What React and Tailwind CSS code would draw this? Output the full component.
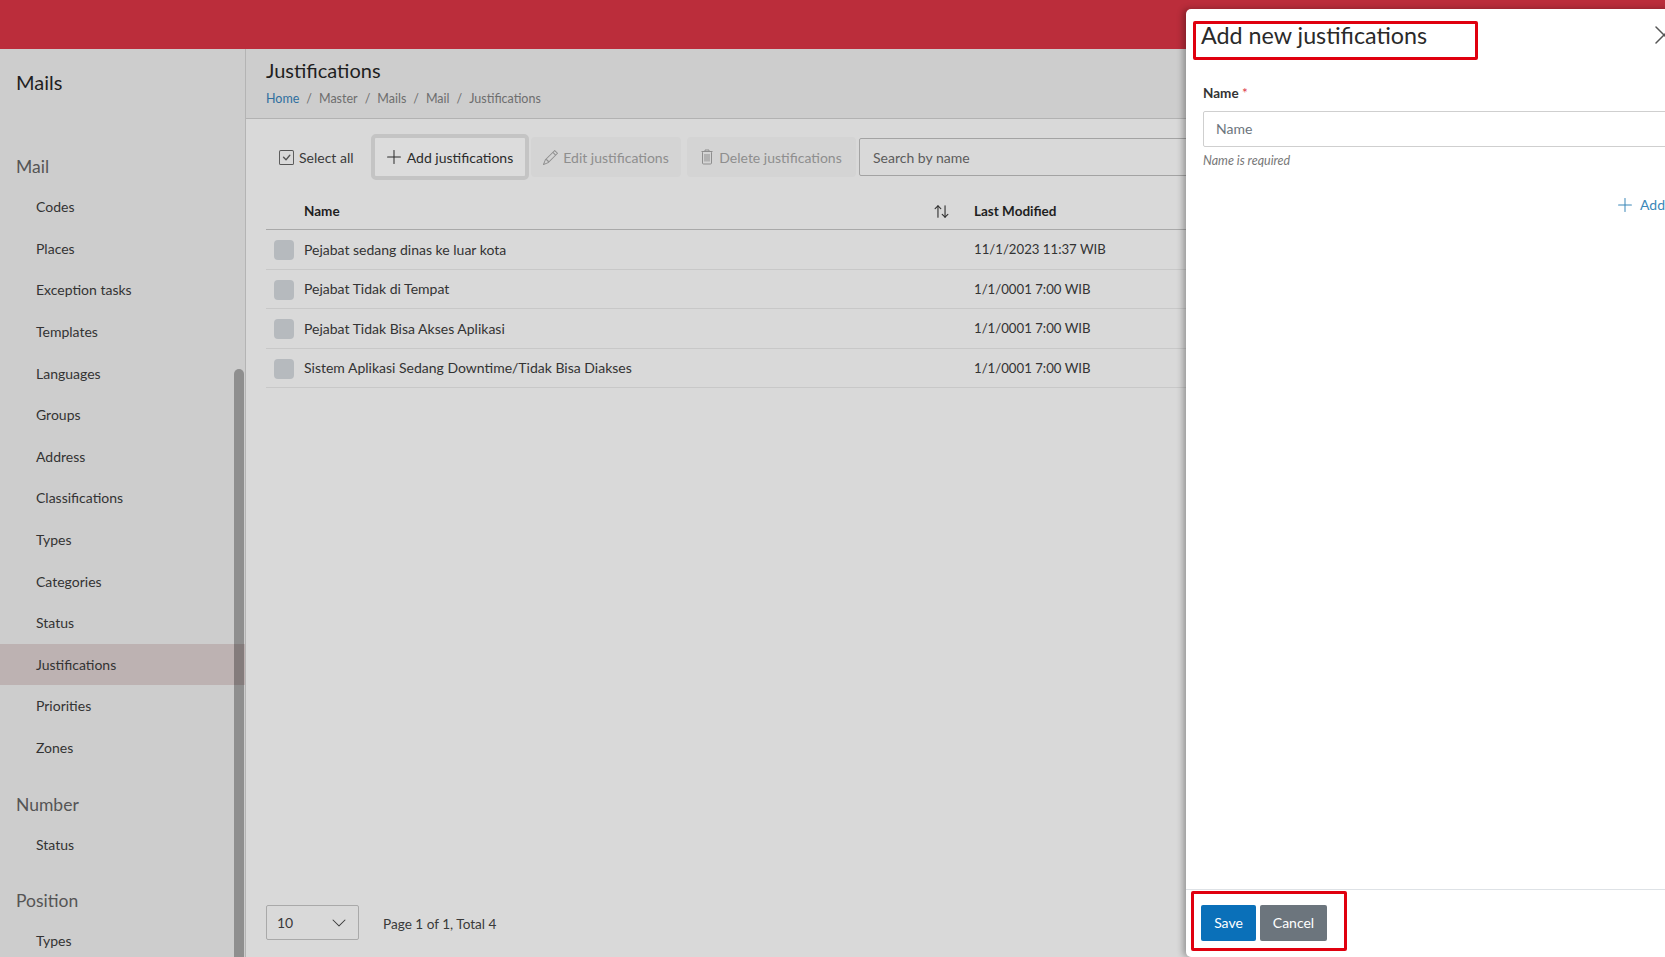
import React from "react";
import { BsCheckSquare, BsPencil, BsChevronDown } from "react-icons/bs";
import { ArrowUpDown, Plus, X } from "lucide-react";

const mailLinks = [
  "Codes",
  "Places",
  "Exception tasks",
  "Templates",
  "Languages",
  "Groups",
  "Address",
  "Classifications",
  "Types",
  "Categories",
  "Status",
  "Justifications",
  "Priorities",
  "Zones",
];

const rows = [
  ["Pejabat sedang dinas ke luar kota", "11/1/2023 11:37 WIB"],
  ["Pejabat Tidak di Tempat", "1/1/0001 7:00 WIB"],
  ["Pejabat Tidak Bisa Akses Aplikasi", "1/1/0001 7:00 WIB"],
  ["Sistem Aplikasi Sedang Downtime/Tidak Bisa Diakses", "1/1/0001 7:00 WIB"],
];

function TrashIcon() {
  return (
    <svg width="12" height="16" viewBox="0 0 12 16" fill="none" stroke="currentColor" strokeWidth="1" className="mr-[6px]">
      <path d="M4 2.5V1h4v1.5" />
      <path d="M0.5 2.5h11" />
      <rect x="1.5" y="2.5" width="9" height="12.5" rx="1" />
      <path d="M4 5v7.5M6 5v7.5M8 5v7.5" />
    </svg>
  );
}

function SideLink({ label }) {
  const active = label === "Justifications";
  return (
    <div className={`h-[41.6px] flex items-center pl-[36px] text-[14px] text-[#333] ${active ? "bg-[#bdb2b2]" : ""}`}>
      {label}
    </div>
  );
}

function SideHeading({ label, className }) {
  return <div className={`pl-[16px] h-[37px] flex items-center text-[17.5px] text-[#555] ${className}`}>{label}</div>;
}

function Sidebar() {
  return (
    <aside className="relative w-[246px] shrink-0 bg-[#cdcdcd] border-r border-[#b4b4b4] overflow-hidden">
      <div className="pl-[16px] pt-[18px] h-[100px] text-[20px] text-[#1f1f1f]">Mails</div>
      <SideHeading label="Mail" />
      {mailLinks.map((l) => (
        <SideLink key={l} label={l} />
      ))}
      <SideHeading label="Number" className="mt-[18px]" />
      <SideLink label="Status" />
      <SideHeading label="Position" className="mt-[18px]" />
      <SideLink label="Types" />
      {/* scrollbar thumb */}
      <div className="absolute left-[234px] top-[320px] bottom-0 w-[10px] bg-black/30 rounded-t-[5px]"></div>
    </aside>
  );
}

function Toolbar() {
  return (
    <div className="flex items-center h-[46px] text-[14px]">
      <div className="w-[105px] flex items-center pl-[13px] text-[#3a3a3a]">
        <BsCheckSquare className="text-[15px] mr-[5px] text-[#555]" />
        <span>Select all</span>
      </div>
      <button className="w-[158px] h-[46px] flex items-center justify-center bg-[#dcdcdc] border-4 border-[#c4c4c4] rounded-[5px] text-[#2b2b2b]">
        <Plus size={22} strokeWidth={1.1} className="-ml-1 mr-[2px]" />
        <span>Add justifications</span>
      </button>
      <button className="ml-[2px] w-[150px] h-[40px] flex items-center justify-center bg-[#d4d4d4] rounded-[4px] text-[#8e8e8e]">
        <BsPencil className="text-[15px] mr-[5px]" />
        <span>Edit justifications</span>
      </button>
      <button className="ml-[6px] w-[169px] h-[40px] flex items-center justify-center bg-[#d4d4d4] rounded-[4px] text-[#8e8e8e]">
        <TrashIcon />
        <span>Delete justifications</span>
      </button>
      <div className="ml-[3px] flex-1 h-[38px] flex items-center pl-[13px] border border-[#a3a3a3] rounded-[2px] text-[#5c5c5c]">
        Search by name
      </div>
    </div>
  );
}

function Table() {
  return (
    <div className="mt-[12px] text-[14px]">
      <div className="h-[38px] pt-[2px] flex items-center border-b border-[#a9a9a9] font-bold text-[#1f1f1f] text-[13.5px]">
        <div className="w-[38px]"></div>
        <div className="w-[630px]">Name</div>
        <div className="w-[40px]">
          <ArrowUpDown size={17} strokeWidth={1.6} className="-ml-[1px] text-[#333]" />
        </div>
        <div className="flex-1">Last Modified</div>
      </div>
      {rows.map(([name, date]) => (
        <div key={name} className="h-[39.5px] flex items-center border-b border-[#c8c8c8] text-[#333]">
          <div className="w-[38px] pl-[8px] pt-[2px]">
            <div className="w-[20px] h-[20px] rounded-[4px] bg-[#b6babe]"></div>
          </div>
          <div className="w-[670px]">{name}</div>
          <div className="flex-1 pt-[2px] text-[13.2px]">{date}</div>
        </div>
      ))}
    </div>
  );
}

function Panel() {
  return (
    <div className="absolute left-[1186px] top-[9px] bottom-0 w-[600px] flex flex-col bg-white rounded-l-[5px] shadow-[-3px_0_6px_rgba(0,0,0,0.3)]">
      <div className="h-[57px] flex items-center pl-[15px] pb-[4px] relative">
        <span className="text-[23.3px] text-[#2a2a2a]">Add new justifications</span>
        <X size={32} strokeWidth={1.1} className="absolute left-[462px] top-[10px] text-[#555]" />
      </div>
      <div className="flex-1 pl-[17px] pt-[18px]">
        <div className="text-[13.5px] font-bold text-[#333] leading-[18px]">
          Name <span className="text-[#dc3545] font-normal">*</span>
        </div>
        <div className="mt-[9px] h-[36px] flex items-center pl-[12px] pb-[2px] border border-[#cfcfcf] rounded-[2px] text-[14px] text-[#6c757d]">
          Name
        </div>
        <div className="mt-[5px] text-[12.5px] italic text-[#777]">Name is required</div>
        <div className="mt-[23px] pl-[411px] flex items-center text-[14px] text-[#3b87b8]">
          <Plus size={22} strokeWidth={1.1} className="mr-[4px]" />
          <span>Add</span>
        </div>
      </div>
      <div className="h-[68px] flex items-center gap-[4px] pl-[15px] pb-[2px] border-t border-[#dee2e6]">
        <button className="w-[55px] h-[36px] bg-[#0a70b9] rounded-[2px] text-white text-[14px]">Save</button>
        <button className="w-[67px] h-[36px] bg-[#6c757d] rounded-[2px] text-white text-[14px]">Cancel</button>
      </div>
    </div>
  );
}

export default function App() {
  return (
    <div className="relative w-[1665px] h-[957px] overflow-hidden flex flex-col font-['Lato',sans-serif]">
      <div className="h-[49px] shrink-0 bg-[#bb2d3b]"></div>
      <div className="flex-1 flex min-h-0">
        <Sidebar />
        <main className="flex-1 min-w-0 flex flex-col bg-[#d9d9d9]">
          <div className="h-[70px] shrink-0 pl-[20px] pt-[8px] bg-[#cdcdcd] border-b border-[#b2b2b2]">
            <div className="text-[20px] text-[#1f1f1f] leading-[27px]">Justifications</div>
            <div className="mt-[6px] text-[12.5px] text-[#6e6e6e] flex gap-[7px]">
              <span className="text-[#2f6f9f]">Home</span>
              <span>/</span>
              <span>Master</span>
              <span>/</span>
              <span>Mails</span>
              <span>/</span>
              <span>Mail</span>
              <span>/</span>
              <span>Justifications</span>
            </div>
          </div>
          <div className="flex-1 flex flex-col pl-[20px] pt-[15px] pb-[17px]">
            <Toolbar />
            <Table />
            <div className="mt-auto flex items-center text-[14px] text-[#3a3a3a]">
              <div className="w-[93px] h-[35px] flex items-center justify-between pl-[10px] pr-[11px] border border-[#a9a9a9] rounded-[2px]">
                <span>10</span>
                <BsChevronDown className="text-[16px]" />
              </div>
              <span className="ml-[24px] pt-[4px] text-[13.6px]">Page 1 of 1, Total 4</span>
            </div>
          </div>
        </main>
      </div>
      <Panel />
      {/* red annotation boxes drawn on the screenshot */}
      <div className="absolute left-[1193px] top-[21px] w-[285px] h-[39px] border-[3px] border-[#e0000f] rounded-[2px]"></div>
      <div className="absolute left-[1191px] top-[891px] w-[156px] h-[60px] border-[3px] border-[#e0000f] rounded-[2px]"></div>
    </div>
  );
}
